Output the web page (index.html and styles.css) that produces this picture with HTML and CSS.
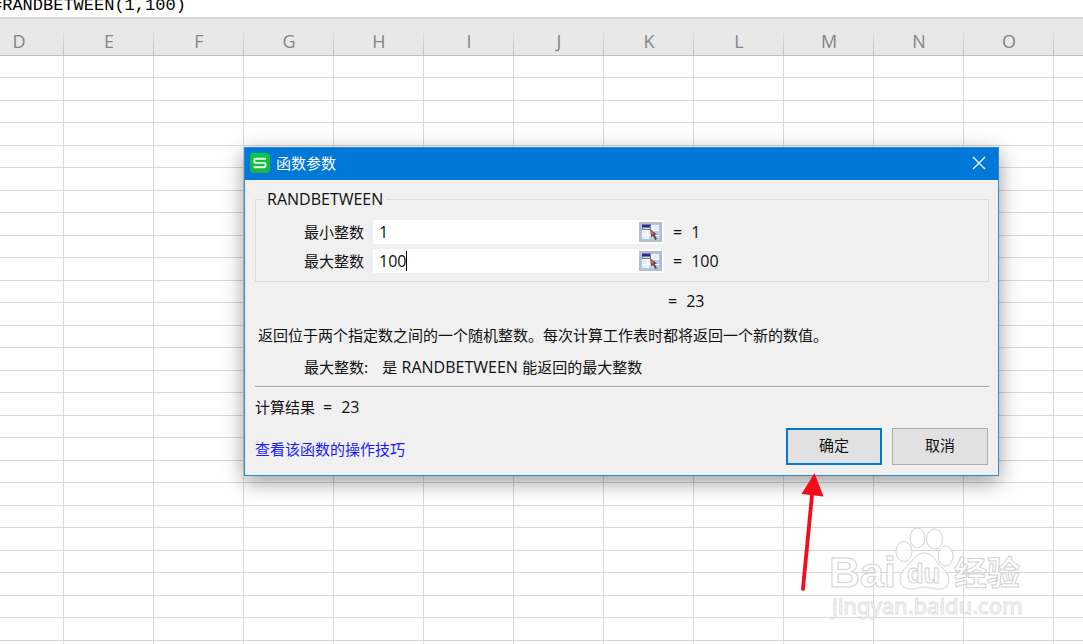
FILE: index.html
```html
<!DOCTYPE html>
<html lang="zh-CN">
<head>
    <meta charset="UTF-8">
    <meta name="viewport" content="width=device-width, initial-scale=1.0">
    <title>函数参数</title>
    <link rel="stylesheet" href="styles.css">
</head>
<body>
    <div class="formula-bar">
        <input class="formula" type="text" aria-label="fx" value="=RANDBETWEEN(1,100)">
    </div>

    <div class="sheet">
        <table class="grid">
            <thead>
                <tr id="columns"></tr>
            </thead>
            <tbody id="rows"></tbody>
        </table>
    </div>

    <form class="dialog">
        <div class="titlebar">
            <svg class="logo" width="20" height="20" viewBox="0 0 20 20">
                <defs>
                    <linearGradient id="green" x1="0" y1="0" x2="0" y2="1">
                        <stop offset="0" stop-color="#00cf3c"/>
                        <stop offset="1" stop-color="#22b14c"/>
                    </linearGradient>
                </defs>
                <rect width="20" height="20" rx="4" fill="url(#green)"/>
                <path d="M16 5.8H6.2Q4.2 5.8 4.2 7.8T6.2 9.9H13.6Q15.6 9.9 15.6 12T13.6 14.2H3.6" fill="none" stroke="#e9ffec" stroke-width="1.9"/>
            </svg>
            <h1 class="title">函数参数</h1>
            <button class="close" type="button" aria-label="关闭">
                <svg width="14" height="14" viewBox="0 0 14 14">
                    <path d="M1 1L13 13M13 1L1 13" stroke="#fff" stroke-width="1.3"/>
                </svg>
            </button>
        </div>

        <div class="content">
            <fieldset class="params">
                <legend class="en">RANDBETWEEN</legend>
                <div class="param">
                    <label for="min">最小整数</label>
                    <div class="field">
                        <input class="en" type="text" id="min" value="1">
                        <button class="pick" type="button" aria-label="选择区域">
                            <svg width="23" height="20" viewBox="0 0 23 20">
                                <use href="#pick-icon"/>
                            </svg>
                        </button>
                    </div>
                    <output class="en equals" for="min"><span>=</span><span>1</span></output>
                </div>
                <div class="param">
                    <label for="max">最大整数</label>
                    <div class="field">
                        <input class="en" type="text" id="max" value="100">
                        <span class="caret"></span>
                        <button class="pick" type="button" aria-label="选择区域">
                            <svg width="23" height="20" viewBox="0 0 23 20">
                                <g id="pick-icon">
                                    <rect width="23" height="20" fill="#b9bdc2"/>
                                    <rect x="2" y="2" width="19" height="16" fill="#a9c8f5"/>
                                    <rect x="3" y="3" width="17" height="14" fill="#e6effc"/>
                                    <path d="M14 9H20V17H10Z" fill="#b3cdfb"/>
                                    <path d="M3 8.5H20M3 13.5H20M8.5 8V17M14 3V17" stroke="#fff" fill="none"/>
                                    <rect x="3" y="2" width="9" height="6" fill="#777b96"/>
                                    <rect x="3" y="3" width="8" height="2" fill="#2b2b9b"/>
                                    <rect x="4" y="6" width="7" height="1" fill="#dcdfe8"/>
                                    <path d="M11 7L18 12.5L15.8 13L18 17L16 18L14 14L12.2 15.5Z" fill="#71463f"/>
                                    <path d="M11.6 8L15 11.5L12.7 13.6Z" fill="#d96a48"/>
                                </g>
                            </svg>
                        </button>
                    </div>
                    <output class="en equals" for="max"><span>=</span><span>100</span></output>
                </div>
            </fieldset>

            <div class="preview en equals"><span>=</span><span>23</span></div>
            <p class="summary">返回位于两个指定数之间的一个随机整数。每次计算工作表时都将返回一个新的数值。</p>
            <dl class="hint">
                <dt>最大整数:</dt>
                <dd>是 <span class="en name">RANDBETWEEN</span> 能返回的最大整数</dd>
            </dl>
            <hr class="line">
            <div class="result">
                <span>计算结果</span>
                <span class="en equals"><span>=</span><span>23</span></span>
            </div>
            <div class="footer">
                <a class="tips" href="#">查看该函数的操作技巧</a>
                <button class="btn btn-ok" type="submit">确定</button>
                <button class="btn" type="button">取消</button>
            </div>
        </div>
    </form>

    <svg class="arrow" width="24" height="120" viewBox="0 0 24 120">
        <path d="M1.8 117.500L11 22" stroke="#f20d1b" stroke-width="3.8"/>
        <path d="M13.500 0L22.500 23.500L0.500 21Z" fill="#f20d1b"/>
    </svg>

    <svg class="watermark" width="200" height="94" viewBox="0 0 200 94">
        <g class="mark">
            <ellipse cx="76" cy="24.500" rx="8" ry="10"/>
            <ellipse cx="89.500" cy="11" rx="7.500" ry="10"/>
            <ellipse cx="106.500" cy="12" rx="8" ry="10"/>
            <ellipse cx="117.500" cy="29" rx="7.500" ry="10"/>
            <path d="M96 26C103 26 106 31 109 35C113 41 121 45 121 53C121 60 115 63 108 62C103 61 100 60 96 60C91 60 88 62 83 62C76 62 72 58 72 52C72 44 79 40 83 35C87 30 90 26 96 26Z"/>
        </g>
        <text class="mark latin" x="1" y="60">Bai</text>
        <text class="mark du" x="79" y="56">du</text>
        <text class="mark cjk" x="126" y="58">经验</text>
        <text class="mark site" x="4" y="87">jingyan.baidu.com</text>
    </svg>

    <script>
        const letters = ['D', 'E', 'F', 'G', 'H', 'I', 'J', 'K', 'L', 'M', 'N', 'O', ''];
        const columns = document.getElementById('columns');
        const rows = document.getElementById('rows');

        for (const letter of letters) {
            const th = document.createElement('th');
            th.scope = 'col';
            th.textContent = letter;
            columns.appendChild(th);
        }

        for (let i = 0; i < 60; i++) {
            const row = rows.insertRow();
            for (let j = 0; j < letters.length; j++) {
                row.insertCell();
            }
        }
    </script>
</body>
</html>
```
FILE: styles.css
```css
* {
    box-sizing: border-box;
}

body {
    margin: 0;
    height: 100vh;
    overflow: hidden;
    display: flex;
    flex-direction: column;
    background-color: #fff;
    color: #111;
    font-family: "Noto Sans CJK SC", sans-serif;
    font-size: 15px;
    line-height: 20px;
}

button,
input {
    font: inherit;
    color: inherit;
    padding: 0;
    border: none;
    border-radius: 0;
}

.en {
    font-family: "Open Sans", "Noto Sans", sans-serif;
    font-size: 16px;
}

.formula-bar {
    height: 17px;
    overflow: hidden;
    display: flex;
    align-items: flex-end;
}

.formula {
    width: 100%;
    height: 22px;
    margin-left: -8px;
    font-family: "Liberation Mono", monospace;
    font-size: 17px;
    line-height: 22px;
    color: #000;
    flex-shrink: 0;
    background: none;
}

/* sheet */
.sheet {
    flex: 1;
    overflow: hidden;
    border-top: 2px solid #d6d6d6;
    background: linear-gradient(#e8e8e8, #e8e8e8) top / 100% 36px no-repeat;
}

.grid {
    width: 1170px;
    margin-left: -26px;
    table-layout: fixed;
    border-collapse: separate;
    border-spacing: 0;
}

.grid th {
    height: 37px;
    padding: 8px 0 0;
    border-bottom: 1px solid #bfbfbf;
    background: linear-gradient(#e8e8e8, #bdbdbd) right bottom / 1px 26px no-repeat #e8e8e8;
    color: #858585;
    font-family: "Open Sans", sans-serif;
    font-size: 18px;
    font-weight: 400;
}

.grid td {
    height: 23px;
    padding: 0;
    border-right: 1px solid #d8d8d8;
    border-bottom: 1px solid #d8d8d8;
}

.grid tr:nth-child(odd) td {
    height: 22px;
}

/* dialog */
.dialog {
    position: absolute;
    top: 147px;
    left: 244px;
    width: 755px;
    border: 1px solid #2b8bd8;
    background-color: #f0f0f0;
    box-shadow: 0 6px 20px rgba(0, 0, 0, 0.4);
}

.titlebar {
    display: flex;
    align-items: center;
    gap: 6px;
    height: 32px;
    padding: 0 12px 2px 5px;
    background-color: #0078d7;
    color: #fff;
}

.title {
    flex: 1;
    margin: 0;
    font-size: 15px;
    font-weight: 400;
}

.close {
    display: flex;
    background: none;
}

.content {
    padding: 9px 9px 10px 10px;
}

.params {
    margin: 0;
    padding: 11px 0 8px 48px;
    border: 1px solid #dcdcdc;
    display: flex;
    flex-direction: column;
    gap: 5px;
}

.params legend {
    margin-left: -40px;
    padding: 0 3px;
}

.param {
    display: grid;
    grid-template-columns: 61px 291px auto;
    column-gap: 8px;
    align-items: center;
}

.param .equals {
    padding-left: 1px;
}

.field {
    position: relative;
    display: flex;
    align-items: center;
    height: 24px;
    padding: 0 2px 0 6px;
    background-color: #fff;
}

.field input {
    flex: 1;
    min-width: 0;
    height: 24px;
    background: none;
    outline: none;
}

.caret {
    position: absolute;
    left: 33px;
    top: 2px;
    width: 1px;
    height: 20px;
    background-color: #000;
}

.pick {
    display: flex;
    background: none;
}

.equals {
    display: flex;
    gap: 9px;
}

.preview {
    margin-top: 9px;
    padding-left: 413px;
}

.summary {
    margin: 14px 0 12px;
    padding-left: 3px;
}

.hint {
    display: flex;
    gap: 14px;
    margin: 0;
    padding-left: 49px;
}

.hint dd {
    margin: 0;
}

.name {
    padding: 0 1px;
}

.line {
    margin: 9px 0;
    border: none;
    border-top: 1px solid #a0a0a0;
    border-bottom: 1px solid #fff;
}

.result {
    display: flex;
    gap: 8px;
}

.footer {
    display: flex;
    align-items: center;
    gap: 10px;
    margin-top: 11px;
    padding-right: 1px;
}

.tips {
    margin-right: auto;
    padding-top: 4px;
    color: #1a1aff;
    text-decoration: none;
}

.btn {
    width: 96px;
    height: 37px;
    padding-bottom: 3px;
    border: 1px solid #adadad;
    background-color: #e1e1e1;
}

.btn-ok {
    border: 2px solid #0078d7;
}

/* overlay */
.arrow {
    position: absolute;
    left: 801px;
    top: 473px;
}

.watermark {
    position: absolute;
    left: 828px;
    top: 527px;
}

.mark {
    fill: #fff;
    fill-opacity: 0.7;
    stroke: #d2d2d2;
    stroke-width: 1;
}

.latin {
    font: bold 43px "Liberation Sans", sans-serif;
}

.du {
    font: bold 27px "Liberation Sans", sans-serif;
}

.cjk {
    font: bold 33px "Noto Sans CJK SC", sans-serif;
}

.site {
    font: 22px "Noto Sans", sans-serif;
    stroke: #dedede;
}
```
